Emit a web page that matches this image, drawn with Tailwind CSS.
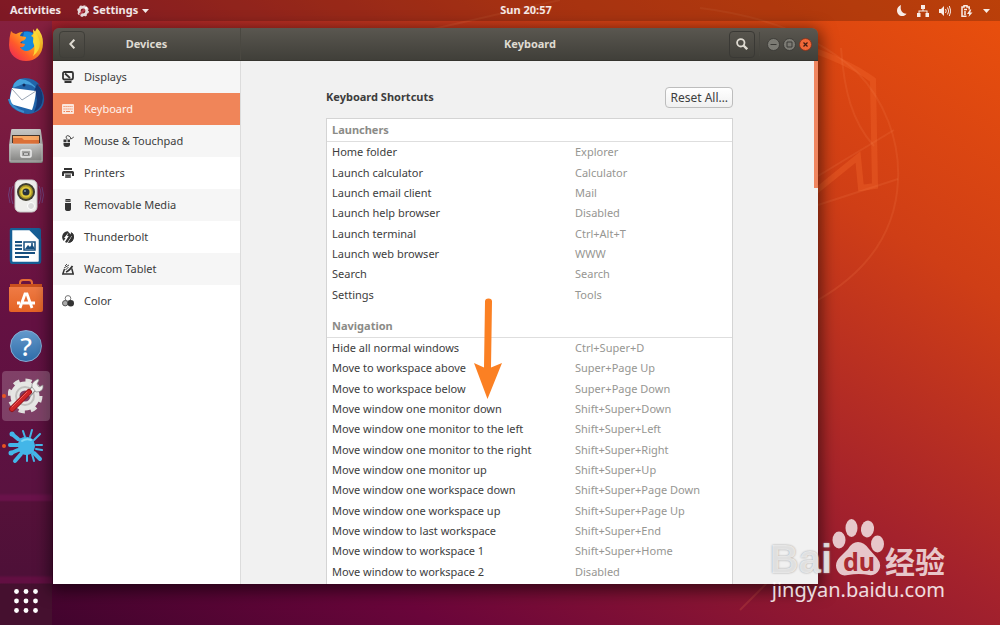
<!DOCTYPE html>
<html lang="en">
<head>
    <meta charset="UTF-8">
    <meta name="viewport" content="width=device-width, initial-scale=1.0">
    <title>Settings - Keyboard</title>
    <script src="https://cdn.jsdelivr.net/npm/@tailwindcss/browser@4"></script>
</head>
<body class="relative flex h-screen flex-col overflow-hidden bg-[linear-gradient(to_top_right,#3c042c_0%,#6a053a_22%,#a4222c_52%,#cf3e16_76%,#ea500c_100%)] font-['Noto_Sans',sans-serif] text-[11px] text-[#3d3d3d]">

    <!-- Wallpaper lines -->
    <svg class="absolute inset-0 h-full w-full" viewBox="0 0 1000 625" preserveAspectRatio="xMaxYMin slice" fill="none" aria-hidden="true">
        <path d="M800 46 Q846 60 873 80 L875 186 L861 188 L858 157 L800 204" stroke="#f0642a" stroke-opacity=".4" stroke-width="6"/>
        <g stroke="#f58050" stroke-opacity=".18" stroke-width="2">
            <path d="M700 8 Q800 20 857 72 C884 100 900 140 898 180 C896 230 870 270 818 300"/>
            <path d="M841 48 C844 90 852 122 874 146"/>
            <path d="M894 130 L818 176 M898 179 L818 205"/>
            <path d="M420 32 L560 0 M740 610 L790 560"/>
        </g>
    </svg>

    <!-- Top bar -->
    <header class="relative grid h-[21px] shrink-0 grid-cols-[1fr_auto_1fr] items-center bg-black/20 px-[10px] font-bold text-white/90">
        <div class="flex items-center gap-4">
            <button>Activities</button>
            <button class="flex items-center gap-1">
                <svg class="size-3" viewBox="0 0 12 12" fill="none" aria-hidden="true">
                    <circle cx="6" cy="6" r="3.800" stroke="#e8dcdc" stroke-width="2.800"/>
                    <circle cx="6" cy="6" r="5.200" stroke="#e8dcdc" stroke-width="1.400" stroke-dasharray="2 2.080"/>
                    <path d="M2.500 9.500 L8 4" stroke="#b84050" stroke-width="1.800"/>
                    <path d="M8 4 L10 2" stroke="#fff" stroke-width="2"/>
                </svg>
                Settings
                <svg class="h-1 w-[7px]" viewBox="0 0 7 4" fill="currentColor" aria-hidden="true"><path d="M0 0h7L3.500 4z"/></svg>
            </button>
        </div>
        <button class="pl-13">Sun 20:57</button>
        <button class="flex items-center gap-[10px] justify-self-end" aria-label="System menu">
            <svg class="h-[11px] w-[10px]" viewBox="0 0 10 11" fill="currentColor"><path d="M4 0C1.500 1 0 3 0 5.500 0 9 2.500 11 5 11c2 0 3.500-.8 4.600-2.300C5.500 9 2.700 5 4 0z"/></svg>
            <svg class="size-3" viewBox="0 0 12 12" fill="currentColor"><path d="M4 0h4v4H6.500v1.500h4V8H12v4H8.500V8h1V6.500h-7V8h1v4H0V8h1.500V5.500h4V4H4z"/></svg>
            <svg class="h-3 w-[12px]" viewBox="0 0 12 12" fill="none" stroke="currentColor"><path d="M0 4h2l3-3v10L2 8H0z" fill="currentColor" stroke="none"/><path d="M6.500 4q1.500 2 0 4M8.500 2.500q2.500 3.500 0 7M10.300 1q3 5 0 10"/></svg>
            <svg class="h-3 w-[12px]" viewBox="0 0 12 12" fill="none" stroke="currentColor" stroke-width="1.500"><path d="M5.500 11.200H1V2h2V.8h3V2h2.200v2.500M3 4.500h3M3 7h2M3 9h2"/><path d="M9 4.500L6 9h2.200L7.500 12 11.500 7.500H9.200L10.300 4.500z" fill="currentColor" stroke="none"/></svg>
            <svg class="h-1 w-[7px]" viewBox="0 0 7 4" fill="currentColor"><path d="M0 0h7L3.500 4z"/></svg>
        </button>
    </header>

    <div class="relative flex min-h-0 flex-1">
        <!-- Dock -->
        <nav class="flex w-[52px] shrink-0 flex-col bg-[linear-gradient(#86203f_0px,#641142_300px,#5a1240_472px,#69124a_475px,#69124a_479px,#551139_481px,#4e1038_554px,#620f42_557px,#620f42_562px,#45102f_563px)]" aria-label="Dock">
            <button class="flex h-[50px] shrink-0 items-center justify-center" aria-label="Firefox">
                <svg class="size-9" viewBox="0 0 36 36">
                    <defs>
                        <linearGradient id="fox" x1="1" y1="0" x2="0" y2="1"><stop offset="0" stop-color="#fff04a"/><stop offset=".35" stop-color="#ffb01f"/><stop offset=".65" stop-color="#ff5a2a"/><stop offset="1" stop-color="#e81a62"/></linearGradient>
                    </defs>
                    <circle cx="19" cy="16" r="13" fill="#1557ae"/>
                    <path d="M16 4q10-2 12 7l-4 13-12 2z" fill="#168be0"/>
                    <path d="M3 3q2 3 5 3 3-2 7-2-3 2-3 4l6 1q0 3-4 4l-2 2 5 1q-1 4-5 3 4 6 10 3 6-3 5-9-1-4-4-5 4-3 6-8 6 6 6 15c0 12-8 18-17 18S1 27 1 17q0-7 2-14z" fill="url(#fox)"/>
                    <path d="M25 1q6 7 7 14 0 8-7 13 3-7 0-14 1-6 0-13z" fill="#ffdc35"/>
                </svg>
            </button>
            <button class="flex h-[50px] shrink-0 items-center justify-center" aria-label="Thunderbird">
                <svg class="size-[38px]" viewBox="0 0 38 38">
                    <path d="M5 11Q8 1 18 1q9 0 15 7l-3-1q8 8 7 17-1 8-8 11-8 4-16 0Q2 31 1 22l2 1q-1-5 2-12z" fill="#2265ab"/>
                    <path d="M13 2q-7 3-7 9l10-4q9-1 14 6-5-10-17-11z" fill="#45a1dc"/>
                    <path d="M30 7q8 9 5 19-2 6-8 9 6-13 0-21z" fill="#153b7c"/>
                    <path d="M5 11l24 3q-1 11-4 19L7 28Q3 27 3 21z" fill="#fff"/>
                    <path d="M5 12l10 11 14-9" fill="none" stroke="#9aa6b5"/>
                    <path d="M2 22q2 9 15 13" fill="none" stroke="#3c8dcc" stroke-width="2"/>
                    <circle cx="17" cy="8" r="1.500" fill="#102c5c"/>
                </svg>
            </button>
            <button class="flex h-[50px] shrink-0 items-center justify-center" aria-label="Files">
                <svg class="size-[34px]" viewBox="0 0 34 34">
                    <defs><linearGradient id="cab" x1="0" y1="0" x2="0" y2="1"><stop offset="0" stop-color="#c6c6c4"/><stop offset="1" stop-color="#858583"/></linearGradient></defs>
                    <path d="M3 0h28q1 0 1 2l2 14v16q0 2-2 2H2q-2 0-2-2V16L2 2q0-2 1-2z" fill="url(#cab)"/>
                    <path d="M3 6h28v8H3z" fill="#46372d"/>
                    <path d="M4 7h26v4H4z" fill="#f7a865"/>
                    <path d="M4 9h9l2 2h15v4H4z" fill="#dc7037"/>
                    <path d="M1 15h32v17H1z" fill="url(#cab)" stroke="#d5d5d3" stroke-width=".6"/>
                    <rect x="12" y="21" width="10" height="7" rx="1" fill="#a5a5a3" stroke="#eee" stroke-width="1.500"/>
                    <path d="M14.500 24h5v2h-5z" fill="#fff" stroke="#555" stroke-width=".7"/>
                </svg>
            </button>
            <button class="flex h-[50px] shrink-0 items-center justify-center" aria-label="Rhythmbox">
                <svg class="size-9" viewBox="0 0 36 36">
                    <path d="M5 8q-4 8 0 18M2 9q-3 8 0 16M31 8q4 8 0 18M34 9q3 8 0 16" fill="none" stroke="#6d5ba0" stroke-opacity=".6"/>
                    <rect x="7" y="2" width="22" height="32" rx="5" fill="#eeeeec" stroke="#c8c8c8"/>
                    <circle cx="18" cy="14" r="9" fill="#3f3e30"/>
                    <circle cx="18" cy="14" r="7" fill="#aa9827"/>
                    <circle cx="18" cy="14" r="5.500" fill="#dfc73b"/>
                    <circle cx="18" cy="14" r="3.500" fill="#26313c"/>
                    <circle cx="17" cy="13" r="1" fill="#7f96a5"/>
                    <circle cx="23" cy="28" r="3.500" fill="#dcdcdc" stroke="#fff"/>
                </svg>
            </button>
            <button class="flex h-[50px] shrink-0 items-center justify-center" aria-label="LibreOffice Writer">
                <svg class="size-9" viewBox="0 0 36 36">
                    <path d="M4 1h18l10 10v22q0 2-2 2H5q-2 0-2-2V2q0-1 1-1z" fill="#fff" stroke="#165f96" stroke-width="2.500"/>
                    <path d="M22 0h9q2 0 2 2v9z" fill="#165f96"/>
                    <path d="M7 14h7M7 17.500h7M7 21h7M7 25h20M7 29h14" stroke="#174f7f" stroke-width="2"/>
                    <path d="M16 14h11v8H16z" fill="#fff" stroke="#174f7f" stroke-width="1.500"/>
                    <path d="M17 21l3-4 2 2 2-3 3 5z" fill="#174f7f"/><circle cx="24" cy="16" r="1" fill="#174f7f"/>
                </svg>
            </button>
            <button class="flex h-[50px] shrink-0 items-center justify-center" aria-label="Ubuntu Software">
                <svg class="size-9" viewBox="0 0 36 36">
                    <defs><linearGradient id="bag" x1="0" y1="0" x2="0" y2="1"><stop offset="0" stop-color="#ef7b45"/><stop offset="1" stop-color="#e46325"/></linearGradient></defs>
                    <path d="M12 8V5q0-3 3-3h6q3 0 3 3v3" fill="none" stroke="#e66c35" stroke-width="2"/>
                    <path d="M2 6h32v3H2z" fill="#c9501e"/>
                    <path d="M1 9h34v23q0 2-2 2H3q-2 0-2-2z" fill="url(#bag)"/>
                    <path d="M12 30l5-14h2l5 14M9 25h3M15 25h12" fill="none" stroke="#fff" stroke-width="2.800"/>
                </svg>
            </button>
            <button class="flex h-[50px] shrink-0 items-center justify-center" aria-label="Help">
                <span class="flex size-8 items-center justify-center rounded-full border border-[#86aed6] bg-linear-to-b from-[#6399cb] to-[#2f6daa] text-[26px] leading-none font-medium text-white">?</span>
            </button>
            <button class="relative mx-[2px] flex h-[50px] shrink-0 items-center justify-center rounded bg-white/20" aria-label="Settings">
                <svg class="size-9" viewBox="0 0 36 36" fill="none">
                    <circle cx="17" cy="18" r="15" stroke="#e0e0de" stroke-width="5" stroke-dasharray="6 5.780"/>
                    <circle cx="17" cy="18" r="10" stroke="#e6e6e4" stroke-width="9"/>
                    <circle cx="17" cy="18" r="9" stroke="#c0bfbd" stroke-width="2"/>
                    <path d="M20 17l8-9" stroke="#888" stroke-width="6"/>
                    <path d="M20 17l8-9" stroke="#eeeeec" stroke-width="4"/>
                    <path d="M24 9q-1-5 6-8l1 1-2 4 2 3 4-2q1 7-7 7z" fill="#eeeeec" stroke="#888" stroke-width=".7"/>
                    <path d="M4 31l17-17" stroke="#92151b" stroke-width="6" stroke-linecap="round"/>
                    <path d="M4 31l17-17" stroke="#cf2528" stroke-width="4" stroke-linecap="round"/>
                    <path d="M4 29l15-15" stroke="#ef6361" stroke-linecap="round"/>
                </svg>
                <span class="absolute top-[23px] left-0 size-1 rounded-full bg-[#e95420]"></span>
            </button>
            <button class="relative mx-[2px] flex h-[50px] shrink-0 items-center justify-center" aria-label="Screenshot tool">
                <svg class="size-9" viewBox="0 0 36 36" fill="none" stroke="#43b6e8" stroke-linecap="round">
                    <path d="M12 11Q19 7 25 12q3 6 0 12-7 5-13 0-3-7 0-13z" fill="#43b6e8"/>
                    <path d="M10 11L4 6M11 17H2M10 22L3 25M13 26L7 33M26 25l6 6" stroke-width="4"/>
                    <path d="M17 9L15 3M22 9l2-7M26 12l6-6M28 17h6M28 21l6 1M19 26v7M24 26l2 7" stroke-width="2"/>
                    <path d="M14 13q4-3 9-1" stroke="#7cd7f5" stroke-width="2"/>
                    <path d="M4 6h.1M3 25h.1" stroke-width="5"/>
                </svg>
                <span class="absolute top-[23px] left-0 size-1 rounded-full bg-[#e95420]"></span>
            </button>
            <button class="mt-auto flex h-[41px] shrink-0 items-center justify-center pb-2" aria-label="Show applications">
                <svg class="size-6" viewBox="0 0 24 24" fill="#fff">
                    <circle cx="2.500" cy="2.500" r="2.400"/><circle cx="12" cy="2.500" r="2.400"/><circle cx="21.500" cy="2.500" r="2.400"/>
                    <circle cx="2.500" cy="12" r="2.400"/><circle cx="12" cy="12" r="2.400"/><circle cx="21.500" cy="12" r="2.400"/>
                    <circle cx="2.500" cy="21.500" r="2.400"/><circle cx="12" cy="21.500" r="2.400"/><circle cx="21.500" cy="21.500" r="2.400"/>
                </svg>
            </button>
        </nav>

        <!-- Settings window -->
        <main class="mt-[7px] mr-[182px] mb-[41px] ml-px flex min-w-0 flex-1 flex-col overflow-hidden rounded-t-md shadow-[0_4px_16px_3px_rgba(0,0,0,0.55)]">
            <div class="flex h-[33px] shrink-0 border-b border-[#35342f] bg-linear-to-b from-[#5a5750] to-[#403f39] font-bold text-[#dfdbd2]">
                <div class="grid w-[188px] shrink-0 grid-cols-[1fr_auto_1fr] items-center border-r border-[#4a4841] px-[6px]">
                    <button class="flex h-[27px] w-[26px] items-center justify-center rounded border border-[#3f3e39]" aria-label="Back">
                        <svg class="h-[10px] w-[6px]" viewBox="0 0 6 10" fill="none" stroke="currentColor" stroke-width="2"><path d="M5.300 .7L1.300 5 5.300 9.300"/></svg>
                    </button>
                    <h2>Devices</h2>
                </div>
                <div class="grid flex-1 grid-cols-[1fr_auto_1fr] items-center pr-[6px]">
                    <h1 class="col-start-2 pl-[7px]">Keyboard</h1>
                    <div class="flex items-center gap-[3px] justify-self-end">
                        <button class="flex h-[27px] w-[26px] items-center justify-center rounded border border-[#3a3935]" aria-label="Search">
                            <svg class="size-3" viewBox="0 0 12 12" fill="none" stroke="currentColor"><circle cx="4.800" cy="4.800" r="3.700" stroke-width="1.800"/><path d="M7.500 7.500l3.700 3.700" stroke-width="2.400"/></svg>
                        </button>
                        <span class="mr-1 ml-px h-6 w-px bg-[#474640]"></span>
                        <button aria-label="Minimize"><svg class="size-[13px]" viewBox="0 0 13 13"><circle cx="6.500" cy="6.500" r="6" fill="#7c7b74" stroke="#383733" stroke-width=".8"/><path d="M3.500 6.500h6" stroke="#3b3a36"/></svg></button>
                        <button aria-label="Maximize"><svg class="size-[13px]" viewBox="0 0 13 13"><circle cx="6.500" cy="6.500" r="6" fill="#7c7b74" stroke="#383733" stroke-width=".8"/><path d="M4 4h5v5H4z" fill="none" stroke="#3b3a36"/></svg></button>
                        <button aria-label="Close"><svg class="size-[13px]" viewBox="0 0 13 13"><circle cx="6.500" cy="6.500" r="6" fill="#ee6838" stroke="#8d3018" stroke-width=".8"/><path d="M4.500 4.500l4 4m0-4l-4 4" stroke="#3d1c12" stroke-width="1.200"/></svg></button>
                    </div>
                </div>
            </div>

            <div class="flex min-h-0 flex-1">
                <nav class="w-[188px] shrink-0 border-r border-[#dcdcdc] bg-white" aria-label="Devices">
                    <a href="#displays" class="flex h-8 items-center gap-[10px] bg-[#f6f6f6] px-[9px]">
                        <svg class="size-3" viewBox="0 0 12 12" fill="none" stroke="#333" stroke-width="1.800"><rect x="1" y="1" width="10" height="7.500" rx="1.500"/><path d="M3 2.500l5 4.500" /><path d="M2.500 11h7"/></svg>
                        Displays
                    </a>
                    <a href="#keyboard" class="flex h-8 items-center gap-[10px] bg-[#f08559] px-[9px] text-white/90" aria-current="page">
                        <svg class="size-3" viewBox="0 0 12 12"><rect y="1" width="12" height="10" rx="1" fill="#fbe7de"/><path d="M1.500 3.500h9M1.500 6h9" stroke="#f08559" stroke-dasharray="1.200 .8"/><path d="M1.500 8.500h1.500M4 8.500h4M9 8.500h1.500" stroke="#f08559"/></svg>
                        Keyboard
                    </a>
                    <a href="#mouse" class="flex h-8 items-center gap-[10px] bg-[#f6f6f6] px-[9px]">
                        <svg class="size-3" viewBox="0 0 12 12"><path d="M1.500 4.500h3v2.700h-3zM5.500 4.500h2.500v2.700H5.500zM1.500 8H8v1.500q0 2.500-3.200 2.500T1.500 9.500z" fill="#333"/><path d="M5 4.500V3.500Q3.500 3 4.200 1.500T7 1t1.500 2.500T11.800 2" fill="none" stroke="#333" stroke-width=".9"/></svg>
                        Mouse &amp; Touchpad
                    </a>
                    <a href="#printers" class="flex h-8 items-center gap-[10px] px-[9px]">
                        <svg class="size-3" viewBox="0 0 12 12" fill="#333"><path d="M2 1h8v2H2zM1.500 4h9Q12 4 12 5.500V9h-2V6.500H2V9H0V5.500Q0 4 1.500 4z"/><path d="M3 7.200h6V11H3z" fill="#777"/><path d="M4 8.500h4M4 10h4" stroke="#333" stroke-width=".7"/></svg>
                        Printers
                    </a>
                    <a href="#media" class="flex h-8 items-center gap-[10px] bg-[#f6f6f6] px-[9px]">
                        <svg class="size-3" viewBox="0 0 12 12" fill="#333"><path d="M3.500 0h5v3h-5zM3 4h6v6q0 2-3 2t-3-2z"/><path d="M4.500 1.200h1v1h-1zM6.500 1.200h1v1h-1z" fill="#fff"/></svg>
                        Removable Media
                    </a>
                    <a href="#thunderbolt" class="flex h-8 items-center gap-[10px] px-[9px]">
                        <svg class="size-3" viewBox="0 0 12 12" fill="#333"><path d="M5.800 .2A5.800 5.800 0 0 0 1.800 10L3.500 7H2L6.500 1.500 5 5h1.700L3 11q1 .7 2 .8L10 4.500H8L9.500 1.300A5.800 5.800 0 0 1 6 11.800L10.500 5.500"/><path d="M7.500.4A5.800 5.800 0 0 1 6 11.800L10 5H7.500L9.500 1.500z"/></svg>
                        Thunderbolt
                    </a>
                    <a href="#wacom" class="flex h-8 items-center gap-[10px] bg-[#f6f6f6] px-[9px]">
                        <svg class="size-3" viewBox="0 0 12 12" fill="none" stroke="#333"><path d="M2.500 6L.8 11h10.400L9.800 5.500" stroke-width="1.500"/><path d="M4 9q3-1 6.500-6" stroke-width="1.800"/><path d="M2 5l5-3M3 3l2-2M3.500 7l3-3" stroke-width=".9"/></svg>
                        Wacom Tablet
                    </a>
                    <a href="#color" class="flex h-8 items-center gap-[10px] px-[9px]">
                        <svg class="size-3" viewBox="0 0 12 12"><circle cx="6" cy="3.400" r="2.800" fill="none" stroke="#777"/><circle cx="3.200" cy="8.200" r="2.700" fill="#aaa" stroke="#555"/><circle cx="8.800" cy="8.200" r="3.200" fill="#333"/></svg>
                        Color
                    </a>
                </nav>

                <section class="relative flex-1 overflow-hidden bg-[#f1f1f1] px-4 pt-[26px]">
                    <div class="mx-auto max-w-[407px]">
                        <div class="flex items-center justify-between">
                            <h3 class="font-bold">Keyboard Shortcuts</h3>
                            <button class="h-[21px] rounded border border-[#bdbdbd] bg-linear-to-b from-white to-[#f0f0f0] px-1 text-xs leading-none">Reset All…</button>
                        </div>

                        <div class="mt-[10px] border border-[#d4d4d4] bg-white pb-4">
                            <h4 id="launchers" class="border-b border-[#dedede] pl-[5px] leading-[22px] font-bold text-[#8b8b87]">Launchers</h4>
                            <table class="h-[163px] w-full table-fixed" aria-labelledby="launchers">
                                <tbody class="[&_td]:p-0 [&_td]:pl-[5px] [&_td]:leading-4 [&_td:last-child]:w-2/5 [&_td:last-child]:text-[#969692]">
                                    <tr><td>Home folder</td><td>Explorer</td></tr>
                                    <tr><td>Launch calculator</td><td>Calculator</td></tr>
                                    <tr><td>Launch email client</td><td>Mail</td></tr>
                                    <tr><td>Launch help browser</td><td>Disabled</td></tr>
                                    <tr><td>Launch terminal</td><td>Ctrl+Alt+T</td></tr>
                                    <tr><td>Launch web browser</td><td>WWW</td></tr>
                                    <tr><td>Search</td><td>Search</td></tr>
                                    <tr><td>Settings</td><td>Tools</td></tr>
                                </tbody>
                            </table>
                            <h4 id="navigation" class="mt-[10px] border-b border-[#dedede] pl-[5px] leading-[22px] font-bold text-[#8b8b87]">Navigation</h4>
                            <table class="h-[244px] w-full table-fixed" aria-labelledby="navigation">
                                <tbody class="[&_td]:p-0 [&_td]:pl-[5px] [&_td]:leading-4 [&_td:last-child]:w-2/5 [&_td:last-child]:text-[#969692]">
                                    <tr><td>Hide all normal windows</td><td>Ctrl+Super+D</td></tr>
                                    <tr><td>Move to workspace above</td><td>Super+Page Up</td></tr>
                                    <tr><td>Move to workspace below</td><td>Super+Page Down</td></tr>
                                    <tr><td>Move window one monitor down</td><td>Shift+Super+Down</td></tr>
                                    <tr><td>Move window one monitor to the left</td><td>Shift+Super+Left</td></tr>
                                    <tr><td>Move window one monitor to the right</td><td>Shift+Super+Right</td></tr>
                                    <tr><td>Move window one monitor up</td><td>Shift+Super+Up</td></tr>
                                    <tr><td>Move window one workspace down</td><td>Shift+Super+Page Down</td></tr>
                                    <tr><td>Move window one workspace up</td><td>Shift+Super+Page Up</td></tr>
                                    <tr><td>Move window to last workspace</td><td>Shift+Super+End</td></tr>
                                    <tr><td>Move window to workspace 1</td><td>Shift+Super+Home</td></tr>
                                    <tr><td>Move window to workspace 2</td><td>Disabled</td></tr>
                                </tbody>
                            </table>
                        </div>
                    </div>
                    <!-- Scrollbar thumb -->
                    <div class="absolute top-0 right-0 h-[127px] w-1 bg-[#f08660]"></div>
                </section>
            </div>
        </main>
    </div>

    <!-- Pointer arrow -->
    <svg class="absolute top-[298px] left-[473px] h-[102px] w-[29px]" viewBox="0 0 29 102" fill="#fb8023" aria-hidden="true">
        <path d="M12 3.500q0-3 3.500-3t3.500 3L18 69.500l11-4.500L14.500 101 1 65l10 4.500z"/>
    </svg>

    <!-- Watermark -->
    <div class="absolute right-[55px] bottom-[21px] flex flex-col items-end text-white/75">
        <div class="flex items-end leading-none font-bold">
            <span class="font-['Liberation_Sans',sans-serif] text-[40px] leading-[34px] text-white/70 [text-shadow:0_0_2px_#999]">Bai</span>
            <span class="relative">
                <svg class="h-[57px] w-[53px]" viewBox="0 0 53 57" fill="currentColor" aria-hidden="true">
                    <ellipse cx="7" cy="21" rx="6.500" ry="8.500"/><ellipse cx="19.500" cy="9" rx="6" ry="9"/><ellipse cx="35.500" cy="10" rx="6.500" ry="8.500" transform="rotate(10 35.500 10)"/><ellipse cx="45.500" cy="25" rx="6.500" ry="8.500"/>
                    <path d="M26 23q6 0 11 7l8 9q5 6 2 12-3 6-10 5-10-2-21 0-8 2-11-5-3-7 3-13l8-8q4-7 10-7z"/>
                </svg>
                <span class="absolute bottom-[1px] left-[11px] text-[25px] leading-[28px] text-[#a92b31]">du</span>
            </span>
            <span class="font-['Noto_Sans_CJK_SC',sans-serif] text-[30px] leading-[32px]">经验</span>
        </div>
        <p class="text-[20px] leading-[28px] text-white/85">jingyan.baidu.com</p>
    </div>

</body>
</html>
